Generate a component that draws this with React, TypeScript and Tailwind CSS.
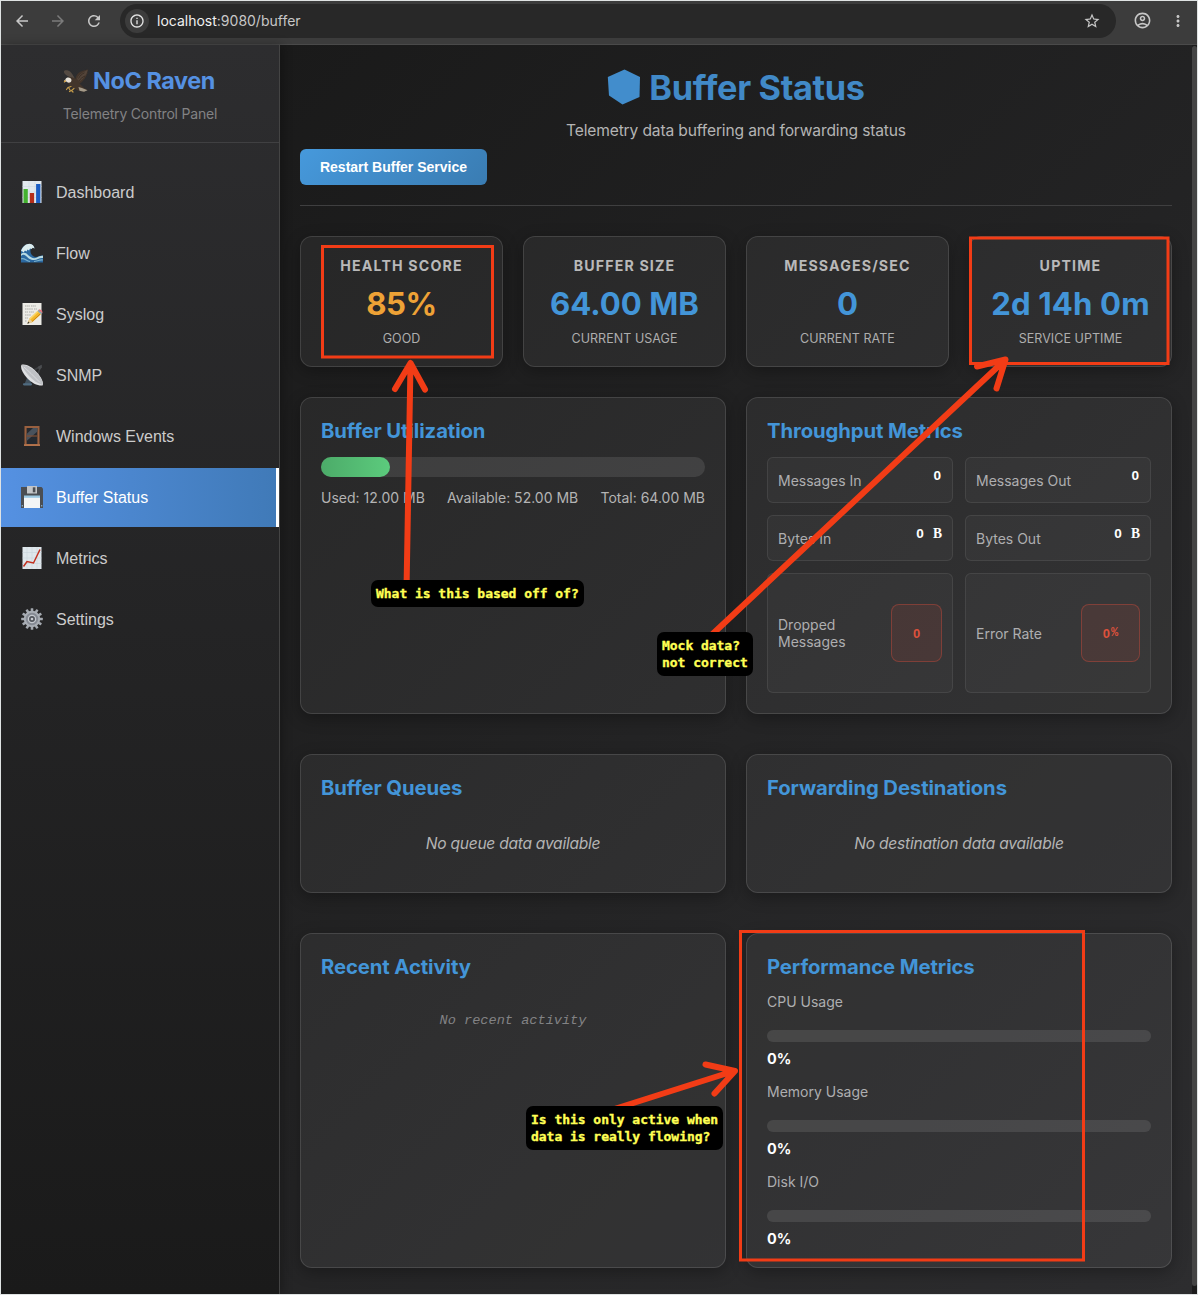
import type { ReactNode } from "react";
import {
  MdArrowBack,
  MdArrowForward,
  MdInfoOutline,
  MdMoreVert,
  MdOutlineAccountCircle,
  MdRefresh,
  MdStarBorder,
} from "react-icons/md";

/* ---------- icons ---------- */

function Eagle() {
  return (
    <svg width="26" height="24" viewBox="0 0 26 24">
      <path d="M6 7C9 6.500 11 8 12.500 10C13 6 15 3.500 18 2.500C20.500 1.500 23 .8 25 .5C24.800 2.500 24 3.500 24.500 4.500C23.500 5.500 23.800 6.500 23 7.500C22 8.500 22.500 9.500 21 10.500C20 12 18.500 13.500 16.500 14.500L20.500 18.500L24.500 21L21 22.800L16 22L11 19.500C7 18.500 5 15 4.500 11Z" fill="#43352b" />
      <path d="M14 10C15.500 6 19 4 24.500 .8C24.500 4 22 8.500 16.500 12.500Z" fill="#54453a" />
      <path d="M1 3.500C.5 1.500 2 1 4 1.200C7 1.500 9 4 11.500 9L7 8C4.500 7 2 6 1 3.500Z" fill="#544a42" />
      <path d="M15.500 9.500C17 6.500 19 5 21.500 3.800M16 12C17.500 9.500 19.500 8 22 7" stroke="#30251d" strokeWidth=".7" fill="none" />
      <path d="M2.500 10.500C3 8.500 5.500 8 7.500 9.200C9 10.500 8.800 12.500 7 13.500C5 14 3.800 13 3.500 12.500L1.200 13.500C.8 12 1.300 11 2.500 10.500Z" fill="#e6e1d8" />
      <path d="M.8 13.600C.8 11.800 1.500 11 2.900 11.200L3 12.600Z" fill="#c99432" />
      <path d="M15.500 18L19 19L24.500 21.200L21 22.800L16.500 21.800Z" fill="#a49a89" />
      <path d="M8 17.500L5 18.500L3.500 20.500M5.500 18.500L7 21M11 19.500L8.500 21.500L6.500 22.500M8.500 21.500L10 23" stroke="#c39a4a" strokeWidth="1.200" fill="none" strokeLinecap="round" />
    </svg>
  );
}

function BarsIcon() {
  return (
    <svg width="22" height="22" viewBox="0 0 22 22">
      <rect x="1.500" width="19" height="22" fill="#e2e9ef" />
      <path d="M1.500 5.500H20.500M1.500 11H20.500M1.500 16.500H20.500M8 0V22M14 0V22" stroke="#cbd6df" strokeWidth=".5" />
      <rect x="2.500" y="8" width="4.300" height="14" fill="#43b12f" />
      <rect x="8.800" y="12" width="4.300" height="10" fill="#b42d1a" />
      <rect x="15.100" y="3" width="4.300" height="19" fill="#1a5dc4" />
    </svg>
  );
}

function WaveIcon() {
  return (
    <svg width="22" height="20" viewBox="0 0 22 20">
      <path d="M0 19.500V7.500C1.500 3.500 5 .8 8.500 1C11 1 13 2.800 13.500 5.500C11.500 4.500 10 5 9.500 7C9 10.500 11 13.500 15 14C17.500 13.500 20 12 22 12.500V19.500Z" fill="#2b68a0" />
      <path d="M0 8C1.500 3.500 5 .7 8.500 .7C11.500 .9 13.200 3 13.500 5.500L11.800 4.700L10.500 6L9 5.500L8 7.500L6.500 6.500L5.500 8.500L4 7.500L2.500 9.500L1.500 8.500Z" fill="#dcecee" />
      <path d="M0 11C2.500 9 5 9.500 7 12C10 15 13 16 16 14.500C18 13.300 20 12.500 22 12.800V15C18 14.500 16 17.500 12 17C8 17 6 13 3.500 12C2 11.500 1 12 0 13Z" fill="#b9dbe4" />
      <path d="M0 16C3 14 5 18 9 18.500M13 18.500C16 18.500 18 16.500 22 17" stroke="#79b0cc" strokeWidth="1.200" fill="none" />
    </svg>
  );
}

function MemoIcon() {
  return (
    <svg width="22" height="22" viewBox="0 0 22 22">
      <rect x="1.500" y="0" width="19" height="22" fill="#ecebe6" />
      <path d="M4 3H9M10 3H15M4 6H12M13 6H16M4 9H7M8 9H13M4 12H10M4 15H7M4 18H6" stroke="#a9a9a5" strokeWidth="1" strokeDasharray="1.500 .6" />
      <path d="M6.500 20.500L8.500 15.500L16.500 8L20 11.300L11.500 19Z" fill="#f3b72b" />
      <path d="M9 16L17 8.500" stroke="#fbd86a" strokeWidth="1.200" />
      <path d="M10.800 18.800L19.200 11" stroke="#cc8514" strokeWidth="1" />
      <path d="M16.500 8L18 6.600L21.500 9.900L20 11.300Z" fill="#8fa3a8" />
      <path d="M17.600 7C19 5.400 22.400 8 21.200 10.100Z" fill="#e8727c" />
      <path d="M6.500 20.500L8.500 15.500L11.500 19Z" fill="#e8cf9e" />
      <path d="M6.300 20.800L7.200 18.500L8.600 20Z" fill="#333" />
    </svg>
  );
}

function DishIcon() {
  return (
    <svg width="22" height="22" viewBox="0 0 22 22">
      <path d="M3.500 20L6 14L10 17L9.500 21H4Z" fill="#42525f" />
      <path d="M3 20.300H10" stroke="#4f6b80" strokeWidth="2.200" strokeLinecap="round" />
      <path d="M13 6L19.500 2.500L17 10" stroke="#3d3f42" strokeWidth="1.700" fill="none" />
      <path d="M16.500 3L20.500 .8L21 3.500L18.500 6Z" fill="#4a4c4f" />
      <path d="M.5 .8C5 -.5 11 3 16 8.500C21 14 23 19.500 21.500 21.500C17 22 11 19.500 6 14C1.500 9 -1 3.500 .5 .8Z" fill="#dfe0e2" />
      <path d="M.8 1C5 .5 11 4 15.800 9C20 13.500 22.500 18.500 21.500 21C17 19.500 12 16.500 8 12C4.500 8 2 4.500 .8 1Z" fill="#bfc1c5" />
      <path d="M3 3L10 9.500L19 18.500" stroke="#d9dadd" strokeWidth="1" fill="none" />
    </svg>
  );
}

function WindowIcon() {
  return (
    <svg width="22" height="22" viewBox="0 0 22 22">
      <rect x="3.500" y="1" width="15" height="20" fill="#99603f" />
      <rect x="5.600" y="3" width="10.800" height="16" fill="#25292f" />
      <path d="M5.600 16V9L12 3H16.400V6.500Z" fill="#49525c" />
      <path d="M5.600 11H16.400" stroke="#7f4f35" strokeWidth="1.200" />
      <rect x="3" y="19.200" width="16" height="1.800" fill="#b3734c" />
    </svg>
  );
}

function FloppyIcon() {
  return (
    <svg width="22" height="22" viewBox="0 0 22 22">
      <path d="M0 1H20.500L22 2.500V22H0Z" fill="#4b4e52" />
      <rect x="6" y="0" width="10" height="7.500" fill="#c4c6c8" />
      <rect x="11.800" y="1.300" width="2.600" height="5" fill="#4b4e52" />
      <rect x="3" y="10" width="16" height="12" fill="#f3f5f6" />
      <rect x="3" y="9.500" width="16" height="2.300" fill="#9cc9e2" />
      <rect x=".7" y="19" width="1.300" height="1.500" fill="#84a8c0" />
      <rect x="20" y="19" width="1.300" height="1.500" fill="#84a8c0" />
    </svg>
  );
}

function ChartIcon() {
  return (
    <svg width="22" height="22" viewBox="0 0 22 22">
      <rect x="1.500" width="19" height="22" fill="#dfe7ec" />
      <path d="M1.500 5.500H20.500M1.500 11H20.500M1.500 16.500H20.500M6 0V22M11 0V22M16 0V22" stroke="#c4d0d9" strokeWidth=".5" />
      <path d="M2.500 19.500L6 14.500L12.500 16L19 2.500" stroke="#c2301f" strokeWidth="1.500" fill="none" />
    </svg>
  );
}

const teeth = [0, 30, 60, 90, 120, 150, 180, 210, 240, 270, 300, 330];

function GearIcon() {
  return (
    <svg width="22" height="22" viewBox="0 0 22 22">
      {teeth.map((a) => (
        <rect key={a} x="9.700" y=".2" width="2.600" height="4" rx=".5" fill="#a4a9b0" transform={`rotate(${a} 11 11)`} />
      ))}
      <circle cx="11" cy="11" r="7.200" fill="#858a93" stroke="#a9aeb5" strokeWidth="2" />
      <circle cx="11" cy="11" r="3.600" fill="#50545b" stroke="#c5c9cf" strokeWidth="1.300" />
      <circle cx="11" cy="11" r="1.300" fill="#c8cbd0" />
    </svg>
  );
}

/* ---------- browser chrome ---------- */

function BrowserBar() {
  return (
    <div className="flex h-[44px] shrink-0 items-center border-b border-[#4a4a4a] bg-[#3c3c3c] pr-[10px] pb-[4px] pl-[12px] text-[#c7c7c7]">
      <MdArrowBack size={18} />
      <MdArrowForward size={18} className="ml-[18px] text-[#7b7b7b]" />
      <MdRefresh size={18} className="ml-[18px]" />
      <div className="ml-[17px] flex h-[34px] w-[996px] items-center rounded-full bg-[#282828] pr-[15px] pl-[5px]">
        <div className="flex size-[24px] items-center justify-center rounded-full bg-[#3c3c3c] text-[#e3e3e3]">
          <MdInfoOutline size={16} />
        </div>
        <span className="ml-[8px] font-['Inter',sans-serif] text-[14px] leading-[18px] text-[#c7c7c7]">
          <span className="text-[#f0f0f0]">localhost</span>:9080/buffer
        </span>
        <MdStarBorder size={18} className="ml-auto" />
      </div>
      <MdOutlineAccountCircle size={19} className="ml-[17px]" />
      <MdMoreVert size={18} className="ml-auto" />
    </div>
  );
}

/* ---------- sidebar ---------- */

const nav: { label: string; icon: ReactNode; active?: boolean }[] = [
  { label: "Dashboard", icon: <BarsIcon /> },
  { label: "Flow", icon: <WaveIcon /> },
  { label: "Syslog", icon: <MemoIcon /> },
  { label: "SNMP", icon: <DishIcon /> },
  { label: "Windows Events", icon: <WindowIcon /> },
  { label: "Buffer Status", icon: <FloppyIcon />, active: true },
  { label: "Metrics", icon: <ChartIcon /> },
  { label: "Settings", icon: <GearIcon /> },
];

function Sidebar() {
  return (
    <aside className="z-10 flex w-[279px] shrink-0 flex-col border-r border-[#444444] bg-linear-to-b from-[#2d2d2f] to-[#1a1a1a] shadow-[2px_0_10px_rgba(0,0,0,0.3)]">
      <div className="flex h-[98px] flex-col items-center border-b border-[#404042] pt-[20px]">
        <div className="flex h-[32px] items-center gap-[4px] pr-[2px] text-[23.4px] font-bold tracking-[-0.4px] text-[#5591e2]">
          <Eagle />
          <span>NoC Raven</span>
        </div>
        <p className="mt-[7px] text-[14px] leading-[20px] tracking-[-0.19px] text-[#828284]">Telemetry Control Panel</p>
      </div>
      <nav className="mt-[20px] flex flex-col gap-[2px] font-['Liberation_Sans',sans-serif] text-[16px]">
        {nav.map((n) => (
          <div
            key={n.label}
            className={
              n.active
                ? "flex h-[59px] items-center border-r-[3px] border-white bg-linear-to-r from-[#5591e2] to-[#407ab8] pl-[20px] text-white"
                : "flex h-[59px] items-center pl-[20px] text-[#cccccc]"
            }
          >
            <span className="flex w-[23px] items-center pb-[2px]">{n.icon}</span>
            <span className="ml-[12px]">{n.label}</span>
          </div>
        ))}
      </nav>
    </aside>
  );
}

/* ---------- main content ---------- */

function Stat({ label, value, sub, tone }: { label: string; value: string; sub: string; tone: string }) {
  return (
    <div className="flex h-[131px] flex-col items-center rounded-[12px] border border-white/12 bg-white/5 pt-[20px] whitespace-nowrap shadow-[0_4px_16px_rgba(0,0,0,0.3)]">
      <div className="text-[14.2px] leading-[18px] font-[650] tracking-[1.15px] text-[#b9b9b9]">{label}</div>
      <div className={`mt-[9px] text-[31.2px] leading-[40px] font-bold ${tone}`}>{value}</div>
      <div className="mt-[6px] text-[12.5px] leading-[18px] tracking-[0.05px] text-[#aeaeae]">{sub}</div>
    </div>
  );
}

function Panel({ title, className, children }: { title: string; className: string; children: ReactNode }) {
  return (
    <section className={`flex flex-col rounded-[12px] border border-white/12 bg-white/5 px-[20px] pt-[21px] shadow-[0_4px_16px_rgba(0,0,0,0.3)] ${className}`}>
      <h2 className="text-[20.3px] leading-[24px] font-[650] tracking-[-0.1px] text-[#4395d8]">{title}</h2>
      {children}
    </section>
  );
}

function Cell({ label, unit }: { label: string; unit?: string }) {
  return (
    <div className="flex h-[46px] justify-between rounded-[6px] border border-white/8 bg-white/3 px-[10px] text-[14px] leading-[18px] text-[#aeaeb0]">
      <span className="mt-[14px]">{label}</span>
      <span className="mt-[9px] flex pr-[1px] font-['Liberation_Sans',sans-serif] text-[13.6px] font-bold text-white">
        0{unit && <span className="-mr-[1px] ml-[9px] font-['Liberation_Serif',serif] text-[13.6px]">{unit}</span>}
      </span>
    </div>
  );
}

function AlertCell({ label, value, box }: { label: string; value: string; box: string }) {
  return (
    <div className="flex h-[120px] items-center justify-between rounded-[6px] border border-white/8 bg-white/3 px-[10px] text-[14px] leading-[17px] text-[#aeaeb0]">
      <span className="w-[90px]">{label}</span>
      <span className={`flex h-[58px] items-center justify-center rounded-[8px] border border-[#e74c3c]/35 bg-[#e74c3c]/10 font-['Liberation_Sans',sans-serif] text-[13px] font-bold text-[#dd513c] ${box}`}>
        {value[0]}
        {value.length > 1 && <span className="ml-[1px] font-['Liberation_Mono',monospace] text-[12px] font-bold">{value.slice(1)}</span>}
      </span>
    </div>
  );
}

function Main() {
  return (
    <main className="flex min-w-0 flex-1 flex-col bg-linear-135 from-[#1a1a1a] to-[#2d2d2f] px-[20px] pt-[20px]">
      <header className="border-b border-[#3f3f40] pb-[20px]">
        <h1 className="flex h-[46px] items-center justify-center gap-[8px] text-[34.3px] font-bold tracking-[-0.35px] text-[#4189c7]">
          <svg width="34" height="36" viewBox="0 0 34 36" className="mb-[3px]">
            <path d="M17.500 .5L33 8L32.500 28L15.500 35.500L2 26.500L.8 8Z" fill="#428dcc" />
          </svg>
          Buffer Status
        </h1>
        <p className="mt-[8px] text-center text-[15.6px] leading-[24px] tracking-[-0.15px] text-[#b4b4b4]">
          Telemetry data buffering and forwarding status
        </p>
        <button className="mt-[6px] flex h-[36px] w-[187px] items-center justify-center rounded-[6px] bg-linear-135 from-[#4699dc] to-[#3a7cb2] font-['Liberation_Sans',sans-serif] text-[14px] font-bold text-white">
          Restart Buffer Service
        </button>
      </header>

      <div className="mt-[30px] grid grid-cols-4 gap-[20px]">
        <Stat label="HEALTH SCORE" value="85%" sub="GOOD" tone="text-[#eea236] tracking-[-0.4px]" />
        <Stat label="BUFFER SIZE" value="64.00 MB" sub="CURRENT USAGE" tone="text-[#4395d8]" />
        <Stat label="MESSAGES/SEC" value="0" sub="CURRENT RATE" tone="text-[#4395d8]" />
        <Stat label="UPTIME" value="2d 14h 0m" sub="SERVICE UPTIME" tone="text-[#4395d8] tracking-[0.1px]" />
      </div>

      <div className="mt-[30px] grid grid-cols-2 gap-x-[20px] gap-y-[40px]">
        <Panel title="Buffer Utilization" className="h-[317px]">
          <div className="mt-[14px] h-[20px] rounded-full bg-white/10">
            <div className="h-full w-[18%] rounded-full bg-linear-to-r from-[#4cab69] to-[#5ccb7d]" />
          </div>
          <div className="mt-[12px] flex justify-between text-[14px] leading-[18px] text-[#b4b4b4]">
            <span>Used: 12.00 MB</span>
            <span>Available: 52.00 MB</span>
            <span>Total: 64.00 MB</span>
          </div>
        </Panel>
        <Panel title="Throughput Metrics" className="h-[317px]">
          <div className="mt-[14px] grid grid-cols-2 gap-[12px]">
            <Cell label="Messages In" />
            <Cell label="Messages Out" />
            <Cell label="Bytes In" unit="B" />
            <Cell label="Bytes Out" unit="B" />
            <AlertCell label="Dropped Messages" value="0" box="w-[51px]" />
            <AlertCell label="Error Rate" value="0%" box="w-[59px]" />
          </div>
        </Panel>

        <Panel title="Buffer Queues" className="h-[139px]">
          <p className="mt-[32px] text-center text-[15.6px] leading-[24px] tracking-[-0.27px] text-[#b4b4b4] italic">No queue data available</p>
        </Panel>
        <Panel title="Forwarding Destinations" className="h-[139px]">
          <p className="mt-[32px] text-center text-[15.6px] leading-[24px] tracking-[-0.25px] text-[#b4b4b4] italic">No destination data available</p>
        </Panel>

        <Panel title="Recent Activity" className="h-[335px]">
          <p className="mt-[32px] text-center font-['Liberation_Mono',monospace] text-[13.6px] leading-[20px] text-[#828284] italic">No recent activity</p>
        </Panel>
        <Panel title="Performance Metrics" className="h-[335px]">
          <div className="mt-[14px] flex flex-col gap-[12px]">
            {["CPU Usage", "Memory Usage", "Disk I/O"].map((m) => (
              <div key={m} className="h-[78px] text-[14px] leading-[18px] text-[#aeaeb0]">
                <div>{m}</div>
                <div className="mt-[19px] h-[12px] rounded-full bg-white/10" />
                <div className="mt-[8px] text-[14.4px] font-[650] text-white">0%</div>
              </div>
            ))}
          </div>
        </Panel>
      </div>
    </main>
  );
}

/* ---------- review mark-up drawn over the page ---------- */

function Markup() {
  const note =
    "absolute rounded-[7px] bg-black px-[5px] py-[5px] font-['DejaVu_Sans_Mono',monospace] text-[13px] leading-[17px] font-bold tracking-[-0.03px] whitespace-pre text-[#ffff54] [-webkit-text-stroke:0.35px_#ffff54]";
  return (
    <>
      <svg className="pointer-events-none absolute -top-px -left-px z-20" width="1198" height="1295" fill="none" stroke="#f23c16">
        <g strokeWidth="3">
          <rect x="322.500" y="246.500" width="170" height="110.500" />
          <rect x="970.500" y="238" width="197.500" height="125.500" />
          <rect x="740.500" y="931.500" width="343" height="328.500" />
        </g>
        <g strokeWidth="6" strokeLinecap="round" strokeLinejoin="round">
          <path d="M406.500 590L410.500 364M395 389L410.500 363L425 389.500" />
          <path d="M704 642L1004 361M977 366.500L1005.500 359.500L996.500 388.500" />
          <path d="M605 1112L734 1071M705.500 1064.500L735 1071L714.500 1093.500" />
        </g>
      </svg>
      <div className={`${note} top-[579px] left-[370px] z-30 w-[213px]`}>What is this based off of?</div>
      <div className={`${note} top-[631px] left-[656px] z-30 w-[96px]`}>{"Mock data?\nnot correct"}</div>
      <div className={`${note} top-[1105px] left-[525px] z-30 w-[197px]`}>{"Is this only active when\ndata is really flowing?"}</div>
    </>
  );
}

export default function App() {
  return (
    <div className="relative flex h-[1295px] w-[1198px] flex-col overflow-hidden border border-[#dfe3e3] bg-[#1c1c1c] font-['Inter',sans-serif]">
      <BrowserBar />
      <div className="flex min-h-0 flex-1">
        <Sidebar />
        <Main />
        <div className="w-[5px] shrink-0 bg-[#1c1c1c] pt-[1px]">
          <div className="h-[1240px] rounded-[3px] bg-[#444444]" />
        </div>
      </div>
      <Markup />
    </div>
  );
}
